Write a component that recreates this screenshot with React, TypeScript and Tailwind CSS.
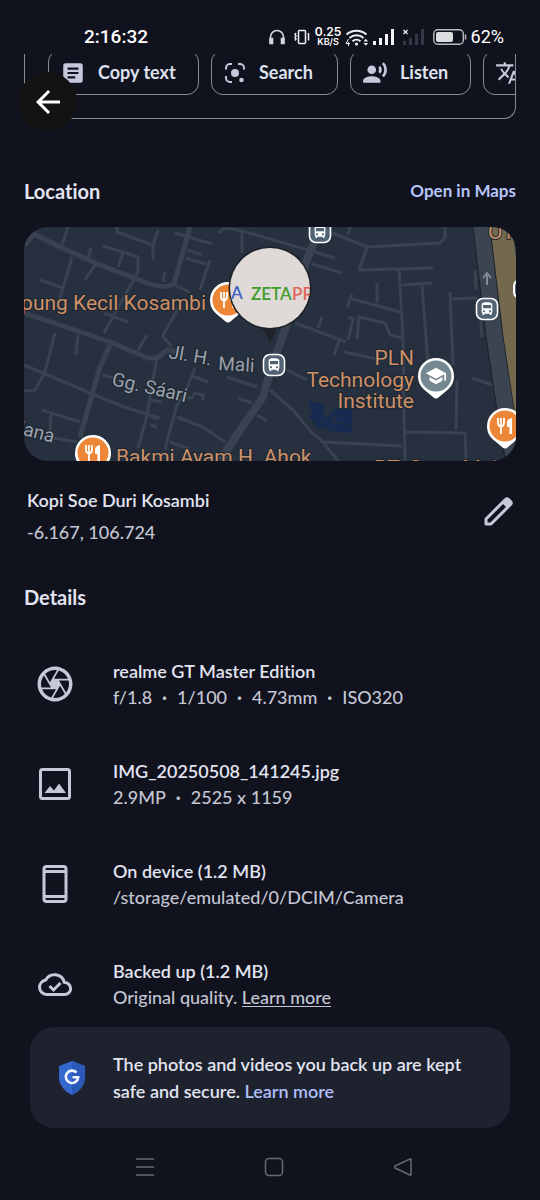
import React from "react";
import {
  MdArrowBack,
  MdArticle,
  MdRecordVoiceOver,
  MdTranslate,
  MdDirectionsBus,
  MdSchool,
  MdOutlineCamera,
} from "react-icons/md";

function LensIcon() {
  return (
    <svg viewBox="0 0 24 24" className="size-6" fill="none" stroke="currentColor" strokeWidth="2">
      <path d="M3 8.500V7a4 4 0 0 1 4-4h2M15 3h2a4 4 0 0 1 4 4v1.500M3 15v2a4 4 0 0 0 4 4h2" />
      <circle cx="12" cy="12" r="4" fill="currentColor" stroke="none" />
      <circle cx="18.500" cy="19" r="2.300" fill="currentColor" stroke="none" />
    </svg>
  );
}

function StatusBar() {
  return (
    <header className="flex h-[54px] items-center justify-between pt-[19px] pr-9 pl-[84px] font-[Roboto,sans-serif] text-white">
      <time className="text-[19px] leading-5 font-medium">2:16:32</time>
      <div className="flex items-center">
        <svg viewBox="0 0 18 18" className="mr-2 h-[18px] w-[18px]" fill="none" stroke="#d4d4da" strokeWidth="1.600">
          <path d="M2.500 15V9a6.500 6.500 0 0 1 13 0v6" />
          <path d="M2 10.500h2.500v5H2zM13.500 10.500H16v5h-2.500z" fill="#d4d4da" />
        </svg>
        <svg viewBox="0 0 16 16" className="mr-1.5 h-4 w-4" fill="none" stroke="#f0f0f4" strokeWidth="1.500">
          <rect x="4.500" y="1.500" width="7" height="13" rx="1" />
          <path d="M2 4l-1 1.500L2 7 1 8.500 2 10l-1 1.500M14.500 4v7.500" />
        </svg>
        <span className="mr-1 flex w-[25px] flex-col items-center text-center font-[Inter,sans-serif] font-semibold">
          <span className="text-[12px] leading-[10px]">0.25</span>
          <span className="text-[9px] leading-[9px]">KB/S</span>
        </span>
        <svg viewBox="0 0 24 18" className="mr-1 h-[18px] w-6" fill="none" stroke="#f0f0f4" strokeWidth="2">
          <path d="M1.500 6.500a15 15 0 0 1 20 0M4.500 10a10.500 10.500 0 0 1 14 0M7.500 13.200a6 6 0 0 1 8 0" />
          <circle cx="11.500" cy="16" r="1.600" fill="#f0f0f4" stroke="none" />
          <path d="M3.500 11L1 15.500h4M3.500 14v4" strokeWidth="1" />
          <path d="M18.500 13.500l2.300-2.800 2.300 2.800zM18.500 15l2.300 2.800 2.300-2.800z" fill="#f0f0f4" stroke="none" />
        </svg>
        <svg viewBox="0 0 22 16" className="mr-2 h-4 w-[22px]" fill="#f4f4f6">
          <path d="M0 12h3v4H0zM6 9h3v7H6zM12 5h3v11h-3zM18 0h3v16h-3z" />
        </svg>
        <svg viewBox="0 0 22 16" className="mr-2 h-4 w-[22px]" fill="#343744">
          <path d="M0 12h3v4H0zM6 9h3v7H6zM12 5h3v11h-3zM18 0h3v16h-3z" />
          <path d="M.5 1l4 4M4.500 1l-4 4" stroke="#f4f4f6" strokeWidth="1.200" />
        </svg>
        <svg viewBox="0 0 34 16" className="mr-1 h-4 w-[34px]" fill="none">
          <rect x=".8" y=".8" width="29.500" height="14.400" rx="4" stroke="#b9bac0" strokeWidth="1.400" />
          <rect x="3" y="3" width="17" height="10" rx="2" fill="#dcdde0" />
          <path d="M32.500 5.500v5" stroke="#b9bac0" strokeWidth="1.500" />
        </svg>
        <span className="text-[18px] leading-5">62%</span>
      </div>
    </header>
  );
}

function Chip({ icon, label, className }: { icon: React.ReactNode; label: string; className: string }) {
  return (
    <button
      className={`flex h-[45px] shrink-0 items-center gap-3 rounded-xl border border-[#8a8c98] pl-[11px] text-[18px] font-bold text-[#dfe1ef] ${className}`}
    >
      <span className="text-[26px] text-[#c6c8dc]">{icon}</span>
      {label}
    </button>
  );
}

function Actions() {
  return (
    <section className="relative px-6">
      <div className="h-[65px] overflow-hidden rounded-b-xl border border-t-0 border-[#8a8c98] pl-[23px]">
        <div className="-mt-1 flex gap-3">
          <Chip className="w-[151px]" icon={<MdArticle />} label="Copy text" />
          <Chip className="w-[127px]" icon={<LensIcon />} label="Search" />
          <Chip className="w-[121px]" icon={<MdRecordVoiceOver />} label="Listen" />
          <Chip className="w-[151px]" icon={<MdTranslate />} label="Translate" />
        </div>
      </div>
      <button
        aria-label="Back"
        className="absolute top-[18px] left-[18px] flex size-[59px] items-center justify-center rounded-full bg-[#131313] text-white"
      >
        <MdArrowBack className="size-9" />
      </button>
    </section>
  );
}

const streets = [
  "M68 227L62 245M117 227V232L153 245V260M158 230L153 245M103 246L138 257V272L124 297L104 333",
  "M123 253L118 267M91 248L88 258M97 262L85 280M72 257L58 305M40 280L63 288M175 233L212 244",
  "M187 250L202 255M186 258L206 264M210 260L200 290M165 272L163 282M174 285L190 292M218 233L225 228L243 231L335 258",
  "M242 230V253M55 333L45 372L35 390L24 391M24 365L90 393L127 408L160 418M78 335L76 355M147 335L138 350",
  "M157 358L152 385L147 415L138 448M42 410L80 422M51 414L50 430M53 438L77 442M102 375L115 378",
  "M195 368L185 393L177 405L170 430L165 450M177 417L203 427L225 442M170 442L190 449M192 376L208 382M227 377L257 387",
  "M187 398H192L195 393L203 395V400M238 398L252 403M257 415L267 421M162 335L172 347M104 313L128 322M180 305L163 335",
  "M287 370L307 380M270 390L293 410L312 433L323 442L402 446M323 442L338 461M404 410L405 461M406 432L465 433L466 461",
  "M457 380L456 430M472 378L492 385M344 352L377 359M295 323L346 342M340 338L334 355M332 233L367 247L440 243L445 238V227",
  "M367 247L359 270L433 268M399 270L403 337L404 410M401 285L432 283M422 285L428 365M450 292L453 365M452 299L477 298",
  "M475 270L476 290M377 283V303M352 294L347 308M352 299L400 312M350 227L348 235M312 264L342 273M357 339L359 317L385 323L390 335L402 338",
  "M348 317L353 319L348 340M322 317L318 328M480 310L482 337M150 416L158 419M150 425L157 427M150 400L162 402",
];

function FoodPin({ x, y }: { x: number; y: number }) {
  return (
    <g transform={`translate(${x} ${y})`}>
      <path d="M0-18a18 18 0 0 1 18 18c0 8-4 12-9 16L3 21q-3 3-6 0L-9 16C-14 12-18 8-18 0A18 18 0 0 1 0-18z" fill="#fff" />
      <circle r="15.500" fill="#ee8637" />
      <path d="M-7-8v5q0 3 3 3.500V8M-4-8v8M-1-8v5q0 3-3 3.500" stroke="#fff" strokeWidth="1.800" fill="none" />
      <path d="M7-8V8H4.500V1H2V-3q0-4 5-5z" fill="#fff" />
    </g>
  );
}

function BusStop({ x, y }: { x: number; y: number }) {
  return (
    <g transform={`translate(${x} ${y})`}>
      <rect x="-10.500" y="-10.500" width="21" height="21" rx="6.500" fill="#506273" stroke="#fff" strokeWidth="1.600" />
      <MdDirectionsBus x="-8" y="-8" width="16" height="16" size="16" color="#fff" />
    </g>
  );
}

function MapCard() {
  return (
    <a href="#map" aria-label="Map" className="mx-6 block h-[234px] overflow-hidden rounded-[24px] bg-[#26303e]">
      <svg viewBox="24 227 492 234" preserveAspectRatio="xMidYMid slice" className="size-full font-[Roboto,sans-serif]">
        <g fill="none" stroke="#394251" strokeLinejoin="round">
          {streets.map((d) => (
            <path key={d} d={d} strokeWidth="3" />
          ))}
          <path d="M24 246L34 234L60 247L100 265L150 284Q165 289 174 284L190 227" strokeWidth="5" />
          <path d="M24 313L60 325L110 342L148 358H157L167 350L185 353M110 345L100 367L90 402L80 437" strokeWidth="5" />
          <path d="M320 227L305 265L285 330L272 365L263 397L247 420L227 450L222 461" strokeWidth="8" />
        </g>
        <path d="M473 227H490L503 337L514 410L516 461H507L497 410L486 337z" fill="#3c4452" />
        <path d="M490 227H512L516 258V415H514L503 337z" fill="#73694f" />
        <path d="M512 227H516V255z" fill="#3c4452" />
        <path d="M473 227L486 337L497 410L505 461M490 227L503 337L514 410" stroke="#1d222c" fill="none" />
        <path d="M487 285V273M483 278L487 273L491 278" stroke="#838891" strokeWidth="2" fill="none" />
        <path d="M309 401l16 4-2 10 4 3 8-10 17 1v24l-21-2-14-4-8-11 5-5-5-3z" fill="#172b50" />
        <path d="M325 412l-5 10 8 10M337 408l-6 14 20 3M336 416l-2 15" stroke="#26303e" fill="none" />

        <g fill="#cd9165" stroke="#1e2632" strokeWidth="2" paintOrder="stroke" fontSize="21">
          <text x="206" y="310" textAnchor="end">Kampung Kecil Kosambi</text>
          <text x="116" y="464">Bakmi Ayam H. Ahok</text>
          <text x="414" y="365" textAnchor="end">PLN</text>
          <text x="414" y="387" textAnchor="end">Technology</text>
          <text x="414" y="408" textAnchor="end">Institute</text>
          <text x="374" y="475">PT. Guna Maju</text>
          <text x="488" y="239">OT</text>
        </g>
        <g fill="#9ba2ab" stroke="#1e2632" strokeWidth="2" paintOrder="stroke" fontSize="19">
          <text transform="translate(168 358) rotate(10)">Jl. H.</text>
          <text transform="translate(218 370) rotate(3)">Mali</text>
          <text transform="translate(111 385) rotate(13)">Gg. Sáari</text>
          <text transform="translate(18 434) rotate(14)">lana</text>
        </g>

        <BusStop x={320} y={232} />
        <BusStop x={487} y={309} />
        <BusStop x={274} y={365} />
        <rect x="514" y="280" width="20" height="18" rx="6" fill="#506273" stroke="#fff" strokeWidth="2" />
        <FoodPin x={228} y={300} />
        <FoodPin x={93} y={453} />
        <FoodPin x={505} y={426} />
        <path d="M436 358a18 18 0 0 1 18 18c0 8-4 12-9 16l-6 5q-3 3-6 0l-6-5c-5-4-9-8-9-16a18 18 0 0 1 18-18z" fill="#fff" />
        <circle cx="436" cy="376" r="15.500" fill="#758891" />
        <MdSchool x="425" y="365" size="22" color="#fff" />

        <path d="M262 327H278L270 343z" fill="#20242a" />
        <clipPath id="photo-pin">
          <circle cx="270" cy="288" r="40" />
        </clipPath>
        <circle cx="270" cy="288" r="41.500" fill="#1d2026" />
        <g clipPath="url(#photo-pin)">
          <rect x="230" y="247" width="80" height="82" fill="#dfdad7" />
          <g fontFamily="Lato, sans-serif" fontSize="17" fontWeight="600">
            <text x="231" y="299" fill="#3c63c4">A</text>
            <text x="251" y="300" fill="#3f9d2d">ZETA</text>
            <text x="292" y="300" fill="#df6558">PR</text>
          </g>
        </g>
      </svg>
    </a>
  );
}

function ImageIcon() {
  return (
    <svg viewBox="0 0 36 36" className="size-9" fill="none" stroke="#c6c8d8" strokeWidth="3">
      <rect x="3.500" y="3.500" width="29" height="29" rx="2" />
      <path d="M7.500 27l5.500-7 4 4.500 5-7L29 27z" fill="#c6c8d8" stroke="none" />
    </svg>
  );
}

function PhoneIcon() {
  return (
    <svg viewBox="0 0 36 40" className="h-10 w-9" fill="none" stroke="#c6c8d8" strokeWidth="3">
      <rect x="7" y="2.500" width="22" height="35" rx="2.500" />
      <path d="M7 7.500h22M7 32.500h22" />
    </svg>
  );
}

function CloudIcon() {
  return (
    <svg viewBox="0 0 36 36" className="size-9" fill="none" stroke="#c6c8d8" strokeWidth="3">
      <path d="M9.500 28.500a7.300 7.300 0 0 1-.8-14.500A10 10 0 0 1 27.300 16.500a6 6 0 0 1 .7 12z" strokeLinejoin="round" />
      <path d="M12.500 20l4 4 7-7" />
    </svg>
  );
}

function PencilIcon() {
  return (
    <svg viewBox="0 0 36 36" className="size-9" fill="none" stroke="currentColor" strokeWidth="3" strokeLinejoin="round">
      <path d="M6 30v-5L25.500 5.500q1.500-1.500 3 0l2 2q1.500 1.500 0 3L11 30z" />
      <path d="M22 9l5.500-4.500 4 4L27 14z" fill="currentColor" stroke="none" />
    </svg>
  );
}

function Detail({ icon, title, children }: { icon: React.ReactNode; title: string; children: React.ReactNode }) {
  return (
    <li className="flex h-[100px] items-center">
      <span className="flex w-9 shrink-0 items-center justify-center">{icon}</span>
      <div className="ml-10 text-[18px] leading-[26px]">
        <h3 className="font-semibold text-[#e2e4f1]">{title}</h3>
        <p className="font-medium text-[#c4c6d3]">{children}</p>
      </div>
    </li>
  );
}

function Dot() {
  return <span className="mx-2.5 font-bold">·</span>;
}

export default function App() {
  return (
    <main className="min-h-screen overflow-hidden bg-[#10121d] font-[Lato,sans-serif] text-[#e2e4f1] [font-variant-ligatures:none]">
      <StatusBar />
      <Actions />

      <div className="mt-[59px] flex h-[26px] items-center justify-between px-6">
        <h2 className="text-[20px] font-bold">Location</h2>
        <a href="#maps" className="text-[17px] font-bold text-[#b7c4fc]">Open in Maps</a>
      </div>
      <div className="mt-[23px]">
        <MapCard />
      </div>

      <div className="mt-[23px] flex items-center justify-between pr-6 pl-[27px]">
        <div className="text-[18px] leading-8">
          <p className="font-semibold">Kopi Soe Duri Kosambi</p>
          <p className="font-medium text-[#c4c6d3]">-6.167, 106.724</p>
        </div>
        <button aria-label="Edit location" className="-mt-2 text-[#c6c8d8]">
          <PencilIcon />
        </button>
      </div>

      <h2 className="mt-9 px-6 text-[20px] leading-[26px] font-bold">Details</h2>
      <ul className="mt-6 pr-6 pl-[37px]">
        <Detail icon={<MdOutlineCamera className="size-[42px] shrink-0 text-[#c6c8d8]" />} title="realme GT Master Edition">
          f/1.8<Dot />1/100<Dot />4.73mm<Dot />ISO320
        </Detail>
        <Detail icon={<ImageIcon />} title="IMG_20250508_141245.jpg">
          2.9MP<Dot />2525 x 1159
        </Detail>
        <Detail icon={<PhoneIcon />} title="On device (1.2 MB)">/storage/emulated/0/DCIM/Camera</Detail>
        <Detail icon={<CloudIcon />} title="Backed up (1.2 MB)">
          Original quality. <a href="#quality" className="underline underline-offset-2">Learn more</a>
        </Detail>
      </ul>

      <aside className="mx-[30px] -mt-[7px] flex h-[101px] items-center rounded-[24px] bg-[#1e212e] pr-8 pl-7">
        <svg viewBox="0 0 28 34" className="h-[34px] w-7 shrink-0">
          <path d="M14 0l13 5v11c0 8-5 14-13 18C6 30 1 24 1 16V5z" fill="#3468ce" />
          <path d="M14 0l13 5v11c0 8-5 14-13 18z" fill="#2b59b8" />
          <path d="M18.500 11.500a6.200 6.200 0 1 0 1.700 4.700H14.500" fill="none" stroke="#eef2ff" strokeWidth="2.600" />
        </svg>
        <p className="ml-[27px] text-[18px] leading-[27px] font-semibold">
          The photos and videos you back up are kept safe and secure.{" "}
          <a href="#backup" className="text-[#b0bff7]">Learn more</a>
        </p>
      </aside>

      <nav className="mt-[27px] flex justify-center gap-[107px] pl-2 text-[#666973]">
        <button aria-label="Recent apps">
          <svg viewBox="0 0 22 24" className="h-6 w-[22px]" fill="none" stroke="currentColor" strokeWidth="1.500">
            <path d="M2 4h18M2 12h18M2 20h18" />
          </svg>
        </button>
        <button aria-label="Home">
          <svg viewBox="0 0 22 24" className="h-6 w-[22px]" fill="none" stroke="currentColor" strokeWidth="1.500">
            <rect x="2.500" y="3.500" width="17" height="17" rx="3.500" />
          </svg>
        </button>
        <button aria-label="Back to previous screen">
          <svg viewBox="0 0 22 24" className="h-6 w-[22px]" fill="none" stroke="currentColor" strokeWidth="1.500" strokeLinejoin="round">
            <path d="M19 4.500v15q0 1-1 .5L3 13q-1-1 0-2l15-7q1-.5 1 .5z" />
          </svg>
        </button>
      </nav>
    </main>
  );
}
